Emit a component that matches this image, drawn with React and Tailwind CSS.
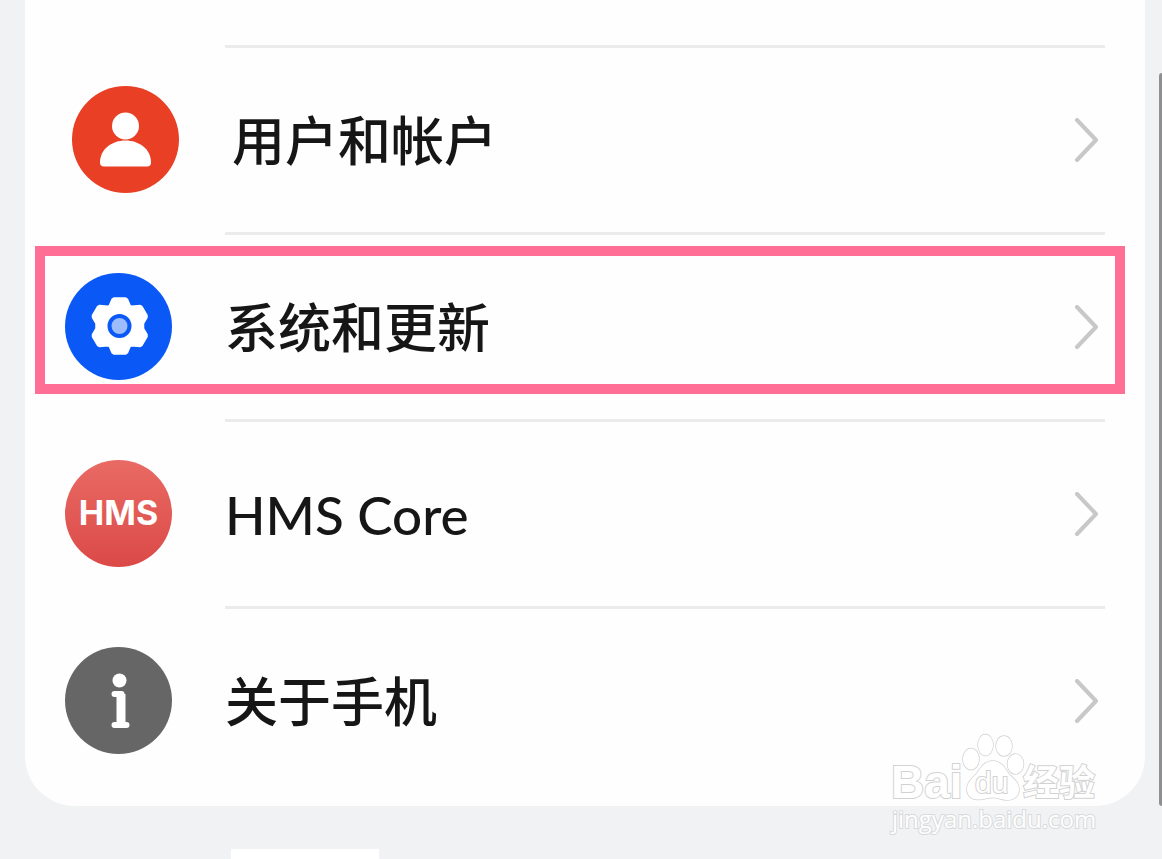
const UserIcon = () => (
    <svg viewBox="0 0 107 107" className="size-full" aria-hidden="true">
        <circle cx="53.5" cy="53.5" r="53.5" fill="#e83f25" />
        <circle cx="53.5" cy="40" r="13.5" fill="#fff" />
        <path d="M32 80.5a4 4 0 0 1-4-4C28 63 40 54.5 53.5 54.5S79 63 79 76.5a4 4 0 0 1-4 4z" fill="#fff" />
    </svg>
);

const GearIcon = () => (
    <svg viewBox="0 0 107 107" className="size-full" aria-hidden="true">
        <circle cx="53.5" cy="53.5" r="53.5" fill="#0a59f7" />
        <path
            d="M49 25.5h11.5l1.5 1 2.5 6 2 1.200 8.500-.7 1.500.8 5 8.500v2l-3.500 6.200v5l3.500 6.200v2l-5 8.500-1.500.8-8.500-.7-2 1.200-2.500 6-1.500 1H49l-1.500-1-2.500-6-2-1.200-8.500.7-1.500-.8-5-8.500v-2l3.500-6.200v-5L28 44.300v-2l5-8.500 1.500-.8 8.500.7 2-1.200 2.500-6z"
            fill="#fff"
            stroke="#fff"
            strokeWidth="2.5"
            strokeLinejoin="round"
        />
        <circle cx="54.5" cy="53" r="10" fill="#9dbcfb" stroke="#0a59f7" strokeWidth="4" />
    </svg>
);

const HmsIcon = () => (
    <span className="flex size-full items-center justify-center rounded-full bg-linear-to-b from-[#e96a64] to-[#db4947] font-['Inter',sans-serif] text-[34px] leading-none font-bold text-white">
        HMS
    </span>
);

const InfoIcon = () => (
    <svg viewBox="0 0 107 107" className="size-full" aria-hidden="true">
        <circle cx="53.5" cy="53.5" r="53.5" fill="#666" />
        <circle cx="54.5" cy="33.5" r="7" fill="#fff" />
        <path d="M49.5 47h7v31M49.5 78h12" fill="none" stroke="#fff" strokeWidth="6" strokeLinecap="round" strokeLinejoin="round" />
        <path d="M56 47v31" stroke="#fff" strokeWidth="9" />
    </svg>
);

const Chevron = () => (
    <svg viewBox="0 0 24 44" className="h-11 w-6 shrink-0" fill="none" stroke="#c8c8c8" strokeWidth="4" strokeLinecap="round" strokeLinejoin="round" aria-hidden="true">
        <path d="M3 2l19 20L3 42" />
    </svg>
);

const Watermark = () => (
    <div className="absolute right-[62px] bottom-6 w-52">
        <svg viewBox="0 0 208 70" className="h-[70px] w-full overflow-visible" fill="#fff" stroke="#d2d2d2" strokeWidth="2" paintOrder="stroke">
            <text x="-1" y="65" fontFamily="Liberation Sans, sans-serif" fontSize="46" fontWeight="700">Bai</text>
            <ellipse cx="79" cy="26" rx="8" ry="10.5" strokeWidth="1.5" />
            <ellipse cx="93.5" cy="12" rx="7.5" ry="10.5" strokeWidth="1.5" />
            <ellipse cx="112" cy="13" rx="8" ry="10" strokeWidth="1.5" />
            <ellipse cx="123.5" cy="31" rx="8" ry="10" strokeWidth="1.5" />
            <path
                d="M101 28c-8 0-12 6-16 12-5 6-10 9-10 16 0 7 5 11 12 10.5 5 0 9-2 14-2s9 2.500 14 2.500c7 0 12-4 12-11 0-6-5-10-10-15-4-6-8-13-16-13z"
                strokeWidth="1.5"
            />
            <text x="83" y="60" fontFamily="Liberation Sans, sans-serif" fontSize="30">du</text>
            <text x="131" y="63" fontFamily="Noto Sans CJK SC, sans-serif" fontSize="36" fontWeight="700">经验</text>
        </svg>
        <div className="font-['Open_Sans',sans-serif] text-2xl leading-8 text-white [paint-order:stroke] [-webkit-text-stroke:2px_#d8dadb]">
            jingyan.baidu.com
        </div>
    </div>
);

const items = [
    { label: '用户和帐户', icon: UserIcon, indent: 'pl-[47px]' },
    { label: '系统和更新', icon: GearIcon, indent: 'pl-10', highlighted: true },
    { label: 'HMS Core', icon: HmsIcon, indent: 'pl-10' },
    { label: '关于手机', icon: InfoIcon, indent: 'pl-10' },
];

const SettingsRow = ({ item }) => {
    const Icon = item.icon;

    return (
        <li className="relative">
            <div className="mr-10 ml-[200px] h-[3px] bg-[#ebebeb]" />
            <a href="#" className={`flex h-46 items-center pr-[47px] ${item.indent}`}>
                <span className="mb-0.5 size-[107px] shrink-0">
                    <Icon />
                </span>
                <span className="ml-[53px] grow text-[53px] leading-none font-medium text-[#161616]">
                    {item.label}
                </span>
                <Chevron />
            </a>
            {item.highlighted && (
                <div className="pointer-events-none absolute top-3.5 right-5 bottom-[25px] left-2.5 border-10 border-[#ff6e95]" />
            )}
        </li>
    );
};

const App = () => {
    return (
        <div className="relative min-h-screen overflow-hidden bg-[#f0f2f4] font-['Lato','Noto_Sans_CJK_SC',sans-serif]">
            <main className="mr-[17px] ml-[25px] rounded-b-[50px] bg-[#fefefe] pt-[45px] pb-[13px]">
                <ul>
                    {items.map((item) => (
                        <SettingsRow key={item.label} item={item} />
                    ))}
                </ul>
            </main>
            {/* Top edge of the next card */}
            <div className="mt-[43px] ml-[231px] h-2.5 w-[148px] bg-white" />
            {/* Scroll thumb */}
            <div className="absolute top-[73px] right-0 h-[733px] w-[3px] rounded-l-sm bg-[#8e8f91]" />
            <Watermark />
        </div>
    );
};

export default App;
